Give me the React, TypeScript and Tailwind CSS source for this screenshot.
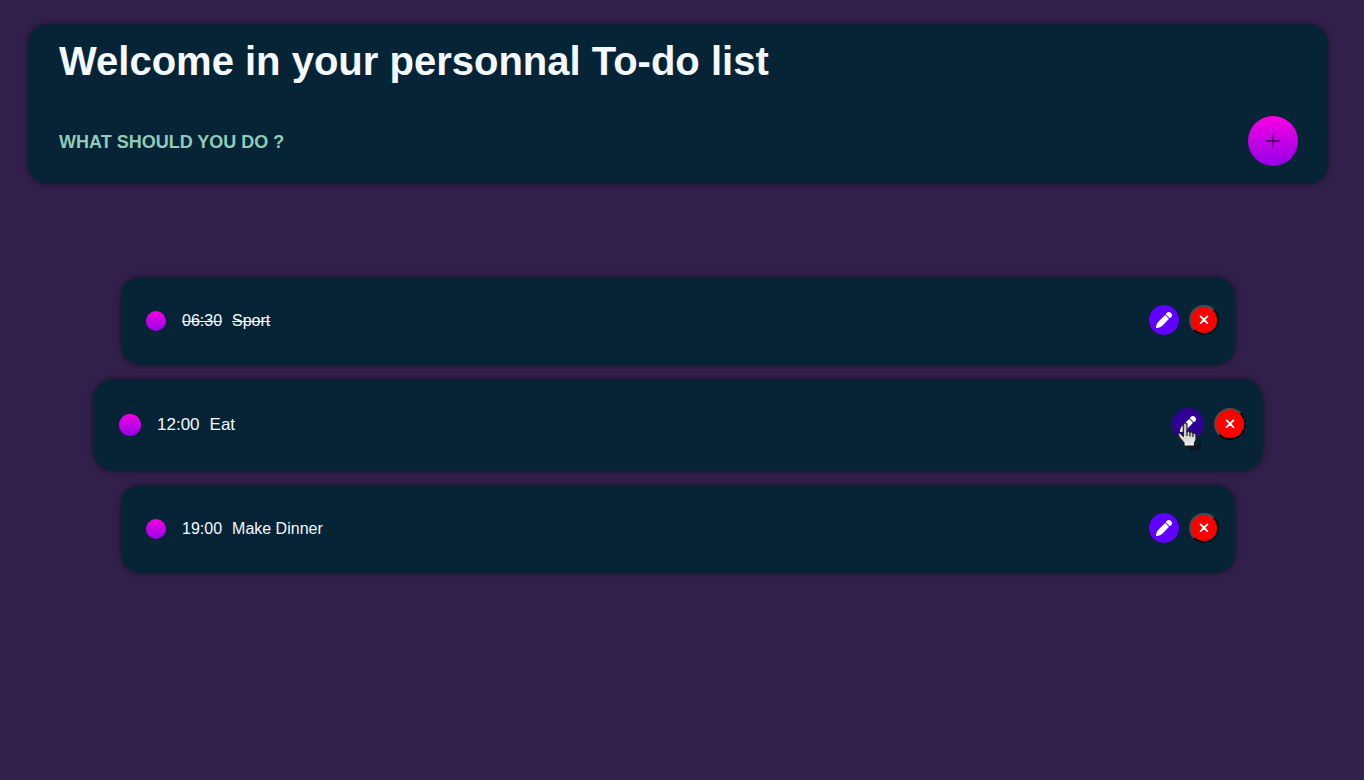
import React from "react";

type Task = { time: string; name: string; done?: boolean; active?: boolean };

const tasks: Task[] = [
  { time: "06:30", name: "Sport", done: true },
  { time: "12:00", name: "Eat", active: true },
  { time: "19:00", name: "Make Dinner" },
];

function PencilIcon() {
  return (
    <svg viewBox="0 0 16 16" className="size-4" fill="#fff" aria-hidden="true">
      <path d="M9.2 3 L13 6.8 L6.6 13.4 C4.9 15 2.8 15.8 .9 16 C.3 16.1 -.1 15.7 0 15.1 C.2 13.2 1 11 2.6 9.4 Z" />
      <path d="M9.9 2.4 C10.1 .9 11.3 0 12.8 0 C14.6 0 16 1.4 16 3.2 C16 4.7 15.1 5.9 13.6 6.1 Z" />
    </svg>
  );
}

function CrossIcon() {
  return (
    <svg viewBox="0 0 10 10" className="size-[10px]" stroke="#fff" strokeWidth="1.9" strokeLinecap="round" aria-hidden="true">
      <path d="M1.6 1.4 L8.4 8.2 M8.4 1.4 L1.6 8.2" />
    </svg>
  );
}

function PlusIcon() {
  return (
    <svg viewBox="0 0 14 14" className="size-3.5" stroke="#500070" strokeWidth="1.8" aria-hidden="true">
      <path d="M7 .4 V13.6 M.4 7 H13.6" />
    </svg>
  );
}

function HandPointer() {
  return (
    <svg viewBox="0 0 26 30" className="pointer-events-none absolute left-[5px] top-3.5 h-[30px] w-[26px]" aria-hidden="true">
      <defs>
        <linearGradient id="hand" x1="0" y1="0" x2="0" y2="1">
          <stop offset="0" stopColor="#b5b5b5" />
          <stop offset="1" stopColor="#eeeeee" />
        </linearGradient>
      </defs>
      <path d="M10 23 H20 L22 17 L24 19 V25 L22 29 H12 Z" fill="#000" opacity=".3" />
      <path
        d="M7.5 1 C8.7 .6 10 1.3 10 2.7 V9.5 C10.8 8.8 12.7 9 13 10.3 C14 9.7 15.7 10 16 11.2 C17.4 10.7 19 11.4 19 13 V17.5 L17.5 21 V24 H7 V21 L2.7 16 L1 12.5 C.8 11.2 2.2 10.4 3.4 11.2 L6.3 14 V2.5 C6.3 1.6 6.8 1.2 7.5 1 Z"
        fill="url(#hand)"
        stroke="#1a1a1a"
        strokeWidth="1.2"
      />
      <path d="M10 9.5 V14 M13 10.3 V14.5 M16 11.2 V15" stroke="#1a1a1a" strokeWidth="1.2" fill="none" />
    </svg>
  );
}

function TaskRow({ task }: { task: Task }) {
  const { time, name, done, active } = task;
  return (
    <li
      className={
        active
          ? "-mx-7 -my-0.5 flex h-[92px] items-center justify-between rounded-[21px] bg-[#072436] pl-[26px] pr-[17px] text-[17px] shadow-[0_0_6px_rgba(0,0,0,0.5)]"
          : "flex h-[88px] items-center justify-between rounded-[20px] bg-[#072436] pl-[25px] pr-4 text-base shadow-[0_0_6px_rgba(0,0,0,0.5)]"
      }
    >
      <div className="flex items-center text-[#f4f8ff]">
        <button
          type="button"
          aria-label={`Toggle ${name}`}
          className={
            active
              ? "mr-4 size-[22px] rounded-full bg-linear-to-b/srgb from-[#f800e4] to-[#9400e8]"
              : "mr-4 size-5 rounded-full bg-linear-to-b/srgb from-[#f800e4] to-[#9400e8]"
          }
        />
        <p className={done ? "flex gap-2.5 line-through" : "flex gap-2.5"}>
          <span>{time}</span>
          <span>{name}</span>
        </p>
      </div>
      <div className="flex items-center gap-2.5 pb-0.5">
        <button
          type="button"
          aria-label={`Edit ${name}`}
          className={
            active
              ? "relative flex size-8 items-center justify-center rounded-full bg-[#300096]"
              : "flex size-[30px] items-center justify-center rounded-full bg-[#6000ff]"
          }
        >
          <PencilIcon />
          {active && <HandPointer />}
        </button>
        <button
          type="button"
          aria-label={`Delete ${name}`}
          className={
            active
              ? "flex size-8 items-center justify-center rounded-full border-2 border-t-[#4c4c4c] border-r-black border-b-black border-l-[#4c4c4c] bg-[#ff0000]"
              : "flex size-[30px] items-center justify-center rounded-full border-2 border-t-[#4c4c4c] border-r-black border-b-black border-l-[#4c4c4c] bg-[#ff0000]"
          }
        >
          <CrossIcon />
        </button>
      </div>
    </li>
  );
}

export default function App() {
  return (
    <main className="min-h-screen bg-[#32204c] py-6 pl-7 pr-9 font-['Liberation_Sans',Arial,sans-serif]">
      <header className="h-40 rounded-[20px] bg-[#072436] pl-[31px] pr-[30px] pt-3.5 shadow-[0_0_6px_rgba(0,0,0,0.5)]">
        <h1 className="text-[40px] leading-[46px] font-bold text-[#f4f8ff]">Welcome in your personnal To-do list</h1>
        <div className="mt-8 flex items-center justify-between">
          <h2 className="pt-0.5 text-lg font-bold text-[#8fcbb6] uppercase">What should you do ?</h2>
          <button
            type="button"
            aria-label="Add a task"
            className="flex size-[50px] items-center justify-center rounded-full bg-linear-to-b/srgb from-[#f800e4] to-[#9400e8]"
          >
            <PlusIcon />
          </button>
        </div>
      </header>
      <ul className="mx-[93px] mt-[93px] flex flex-col gap-4">
        {tasks.map((task) => (
          <TaskRow key={task.time} task={task} />
        ))}
      </ul>
    </main>
  );
}
